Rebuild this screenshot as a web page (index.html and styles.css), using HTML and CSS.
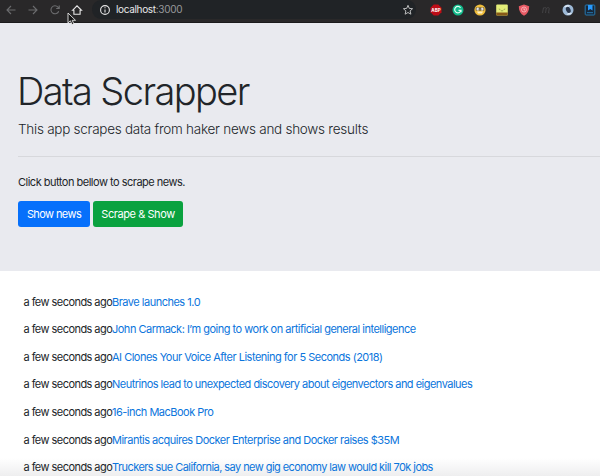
FILE: index.html
```html
<!DOCTYPE html>
<html lang="en">
<head>
<meta charset="utf-8">
<title>Data Scrapper</title>
<link rel="stylesheet" href="styles.css">
</head>
<body>
<header class="toolbar">
  <nav class="nav">
    <svg class="icon dim" viewBox="0 0 12 12"><path d="M10.5 6H2M6 2L2 6l4 4"/></svg>
    <svg class="icon dim" viewBox="0 0 12 12"><path d="M1.5 6H10M6 2l4 4-4 4"/></svg>
    <svg class="icon dim" viewBox="0 0 12 12"><path d="M9.7 7.2A4 4 0 1 1 9 3.2L10 4.3"/><path d="M10.2 1.5v3H7.2"/></svg>
    <svg class="icon" viewBox="0 0 12 12"><path d="M1.500 6.300L6 1.800l4.500 4.500H9.100v3.900H2.900V6.300z"/></svg>
  </nav>
  <div class="address">
    <svg class="icon info" viewBox="0 0 12 12"><circle cx="6" cy="6" r="4.400"/><path d="M6 5.500v3M6 3.300v1"/></svg>
    <span class="url">localhost<span class="port">:3000</span></span>
    <svg class="icon star" viewBox="0 0 12 12"><path d="M6 1.300l1.300 3.100 3.300.3-2.500 2.200.8 3.300L6 8.500l-2.900 1.700.8-3.300-2.500-2.200 3.300-.3z"/></svg>
  </div>
  <div class="extensions">
    <svg class="ext" viewBox="0 0 12 12"><path d="M3.700.5h4.600l3.200 3.200v4.600l-3.200 3.200H3.700L.5 8.300V3.700z" fill="#bd0d17"/><text class="abp" x="6" y="7.900">ABP</text></svg>
    <svg class="ext" viewBox="0 0 12 12"><circle cx="6" cy="6" r="5.500" fill="#11b98a"/><path d="M8.500 3.800A3.200 3.200 0 1 0 9 6.300H6.500M9 6.300v2" fill="none" stroke="#e3fff5" stroke-width="1.200"/></svg>
    <svg class="ext" viewBox="0 0 12 12"><circle cx="6" cy="6" r="5.600" fill="#efbd3b"/><path d="M1.800 3.500h8.400v3H1.800z" fill="#4b432f"/><circle cx="3.900" cy="5" r="1.500" fill="#fff"/><circle cx="8.100" cy="5" r="1.500" fill="#fff"/><circle cx="4.200" cy="5" r=".6" fill="#333"/><circle cx="7.800" cy="5" r=".6" fill="#333"/><path d="M3 7.600h6L8 9.500H4z" fill="#fff1c4"/></svg>
    <svg class="ext" viewBox="0 0 12 12"><rect x=".2" y=".5" width="11.600" height="11" rx="1" fill="#e4ee79"/><path d="M.2 8.500h11.600v2a1 1 0 0 1-1 1H1.200a1 1 0 0 1-1-1z" fill="#875a18"/><path d="M2.800 5l1.500.5M9.200 5l-1.500.5M4.800 6.800h2.400" fill="none" stroke="#7b8740" stroke-width=".7"/></svg>
    <svg class="ext" viewBox="0 0 12 12"><path d="M6 .5l5.200 1.800C11.200 7 9.500 10 6 11.700 2.500 10 .8 7 .8 2.300z" fill="#e75b65"/><circle cx="6" cy="5.500" r="2.500" fill="none" stroke="#ffbdc1" stroke-width=".8"/><path d="M6 4.300v1.600h1.300" fill="none" stroke="#ffdadd" stroke-width=".8"/></svg>
    <svg class="ext" viewBox="0 0 12 12"><path d="M2.500 9l1-5.500M3.200 5c1-1.800 3.100-2 3-.3L5.500 9M6 5.200c1-2 3.400-2.200 3.200-.4L8.500 9h1" fill="none" stroke="#454547" stroke-width=".9"/></svg>
    <svg class="ext" viewBox="0 0 12 12"><circle cx="6" cy="6" r="5.500" fill="#9db9d6"/><path d="M2 3a5 5 0 0 1 6-1.500L6 3.500zM10 9a5 5 0 0 1-5.500 1.500L7 8.500z" fill="#dbe7f3"/><ellipse cx="6.300" cy="6" rx="2.200" ry="3.200" transform="rotate(-25 6 6)" fill="#28354a"/></svg>
    <svg class="ext" viewBox="0 0 12 12"><rect x="1.200" y="1" width="9.600" height="10" rx=".8" fill="#17283a" stroke="#2578b0"/><path d="M4 1h4.500v5.500L6.250 5 4 6.500z" fill="#279aff"/><path d="M3 8.700h6" stroke="#2578b0"/></svg>
  </div>
  <svg class="cursor" viewBox="0 0 10 14"><path d="M1 1v10l2.400-2.200L5 12.600l1.800-.8-1.600-3.500h3.300z" fill="#161616" stroke="#e8e8e8" stroke-width=".9"/></svg>
</header>
<main>
  <section class="jumbotron">
    <h1>Data Scrapper</h1>
    <p class="lead">This app scrapes data from haker news and shows results</p>
    <hr>
    <p class="hint">Click button bellow to scrape news.</p>
    <div class="actions">
      <button class="btn primary">Show news</button>
      <button class="btn success">Scrape &amp; Show</button>
    </div>
  </section>
  <ul class="news">
    <li><span class="time">a few seconds ago</span><a>Brave launches 1.0</a></li>
    <li><span class="time">a few seconds ago</span><a>John Carmack: I’m going to work on artificial general intelligence</a></li>
    <li><span class="time">a few seconds ago</span><a>AI Clones Your Voice After Listening for 5 Seconds (2018)</a></li>
    <li><span class="time">a few seconds ago</span><a class="tight">Neutrinos lead to unexpected discovery about eigenvectors and eigenvalues</a></li>
    <li><span class="time">a few seconds ago</span><a>16-inch MacBook Pro</a></li>
    <li><span class="time">a few seconds ago</span><a>Mirantis acquires Docker Enterprise and Docker raises $35M</a></li>
    <li><span class="time">a few seconds ago</span><a class="tighter">Truckers sue California, say new gig economy law would kill 70k jobs</a></li>
  </ul>
</main>
</body>
</html>
```
FILE: styles.css
```css
* { box-sizing: border-box; }
html, body { height: 100%; }
body {
  margin: 0;
  overflow: hidden;
  display: flex;
  flex-direction: column;
  background: #fff;
  color: #212529;
  font: 11px/17px Inter, "Liberation Sans", sans-serif;
  letter-spacing: -0.5px;
}
h1, p, ul { margin: 0; padding: 0; font-weight: 400; }
.toolbar {
  position: relative;
  flex: none;
  display: flex;
  align-items: center;
  height: 23px;
  padding: 0 4px 3px 5px;
  background: #292829;
  border-bottom: 1px solid #1b1b1c;
}
.nav { display: flex; gap: 10px; width: 87px; }
.icon {
  flex: none;
  width: 12px;
  height: 12px;
  fill: none;
  stroke: #e6e6e6;
  stroke-width: 1.1;
}
.dim { stroke: #6c6d6f; }
.address {
  display: flex;
  align-items: center;
  width: 324px;
  height: 19px;
  padding: 0 2px 0 7px;
  border-radius: 9px;
  background: #202326;
}
.url { margin-left: 5px; color: #e7e8e9; font-size: 10px; letter-spacing: -0.33px; }
.port { color: #98999b; letter-spacing: -0.3px; }
.star { margin-left: auto; stroke: #c8c9ca; stroke-width: .9; }
.extensions { display: flex; flex: 1; justify-content: space-between; padding-left: 14px; }
.ext { flex: none; width: 12px; height: 12px; }
.abp { fill: #fff; font: 700 4.5px Inter, sans-serif; letter-spacing: 0; text-anchor: middle; }
.cursor { position: absolute; left: 67px; top: 12px; width: 10px; height: 14px; }
main { flex: 1; background: linear-gradient(to bottom, transparent 435px, #eeeeef 453px); }
.jumbotron { height: 248px; padding: 45px 0 0 18px; background: #e9eaef; }
h1 { margin-left: -1px; font-size: 38px; line-height: 46px; font-weight: 300; letter-spacing: -1.6px; white-space: nowrap; }
.lead { margin-top: 5px; font-size: 13.500px; line-height: 20px; font-weight: 350; letter-spacing: -0.26px; }
hr { margin: 17px 0 17px; border: 0; border-top: 1px solid #d7d8dc; }
.actions { display: flex; gap: 3px; margin-top: 10px; }
.btn {
  height: 26px;
  padding: 1px 0 0;
  border: 0;
  border-radius: 3px;
  color: #fff;
  font: inherit;
}
.primary { width: 72px; background: #0670fb; letter-spacing: -0.6px; }
.success { width: 90px; background: #0aa23f; letter-spacing: -0.43px; }
.news { padding: 17.200px 0 0 23.500px; list-style: none; }
.news li { display: flex; align-items: center; height: 27.650px; white-space: nowrap; }
.time { width: 88.500px; letter-spacing: -0.55px; }
.news a { color: #0b75dc; letter-spacing: -0.5px; }
.news .tight { letter-spacing: -0.52px; }
.news .tighter { letter-spacing: -0.56px; }
```
